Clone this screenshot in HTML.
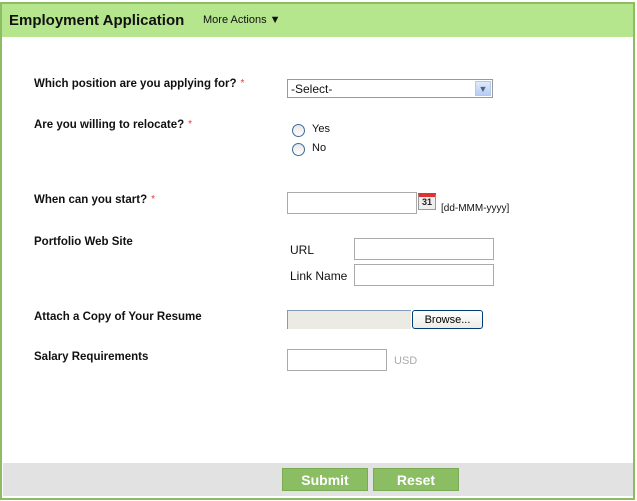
<!DOCTYPE html>
<html><head><style>
body{margin:0;width:637px;height:501px;background:#fff;font-family:"Liberation Sans",Arial,sans-serif;position:relative;overflow:hidden}
.frame{position:absolute;left:0;top:2px;width:631px;height:494px;border:2px solid #8dbd63;border-top-width:2px}
.hdr{position:absolute;left:2px;top:4px;width:631px;height:33px;background:#b5e58c}
.t{position:absolute;left:9px;top:12px;font-size:15px;font-weight:bold;color:#111}
.ma{position:absolute;left:203px;top:14px;font-size:11px;color:#111}
.lbl{position:absolute;left:34px;font-size:11.5px;font-weight:bold;color:#111}
.r{color:#e33;font-weight:normal;font-size:10px;margin-left:4px;vertical-align:top}
.box{position:absolute;border:1px solid #aaa;background:#fff;box-sizing:border-box}
.txt{position:absolute;font-size:12px;color:#111}
.rad{position:absolute;width:11px;height:11px;border:1px solid #3e6a9a;border-radius:50%;background:linear-gradient(#e6e6e6,#fff)}
.ftr{position:absolute;left:3px;top:463px;width:630px;height:33px;background:#e2e2e2}
.btn{position:absolute;top:468px;width:86px;height:23px;background:#8bbd62;border:1px solid #7aab54;color:#fff;font-weight:bold;font-size:14px;text-align:center;line-height:23px;box-sizing:border-box}
</style></head><body>
<div class="frame"></div>
<div class="hdr"></div>
<div class="t">Employment Application</div>
<div class="ma">More Actions ▼</div>

<div class="lbl" style="top:78px">Which position are you applying for?<span class="r">*</span></div>
<div class="box" style="left:287px;top:79px;width:206px;height:19px;border-color:#999"></div>
<div class="txt" style="left:291px;top:82px">-Select-</div>
<div style="position:absolute;left:475px;top:81px;width:16px;height:15px;background:linear-gradient(#dfe9fb,#b7cdf4);border:1px solid #b3c8ec;box-sizing:border-box;font-size:9px;color:#4d6185;text-align:center;line-height:14px">▼</div>

<div class="lbl" style="top:119px">Are you willing to relocate?<span class="r">*</span></div>
<div class="rad" style="left:292px;top:124px"></div><div class="txt" style="left:312px;top:123px;font-size:11px">Yes</div>
<div class="rad" style="left:292px;top:143px"></div><div class="txt" style="left:312px;top:142px;font-size:11px">No</div>

<div class="lbl" style="top:194px">When can you start?<span class="r">*</span></div>
<div class="box" style="left:287px;top:192px;width:130px;height:22px"></div>
<div style="position:absolute;left:418px;top:193px;width:18px;height:17px;background:#eee;border:1px solid #999;box-sizing:border-box;border-top:4px solid #d33;font-size:9px;font-weight:bold;text-align:center;line-height:11px;color:#222">31</div>
<div class="txt" style="left:441px;top:203px;font-size:10px">[dd-MMM-yyyy]</div>

<div class="lbl" style="top:236px">Portfolio Web Site</div>
<div class="txt" style="left:290px;top:243px">URL</div>
<div class="box" style="left:354px;top:238px;width:140px;height:22px"></div>
<div class="txt" style="left:290px;top:269px">Link Name</div>
<div class="box" style="left:354px;top:264px;width:140px;height:22px"></div>

<div class="lbl" style="top:311px">Attach a Copy of Your Resume</div>
<div style="position:absolute;left:287px;top:310px;width:124px;height:19px;background:#ebebe4;border-top:1px solid #7f9db9;border-left:1px solid #7f9db9;box-sizing:border-box"></div>
<div style="position:absolute;left:412px;top:310px;width:71px;height:19px;border:1px solid #003c74;border-radius:3px;background:linear-gradient(#fff,#ecebe6);box-sizing:border-box;font-size:11px;text-align:center;line-height:19px;color:#000">Browse...</div>

<div class="lbl" style="top:351px">Salary Requirements</div>
<div class="box" style="left:287px;top:349px;width:100px;height:22px"></div>
<div class="txt" style="left:394px;top:355px;color:#aaa;font-size:11px">USD</div>

<div class="ftr"></div>
<div class="btn" style="left:282px">Submit</div>
<div class="btn" style="left:373px">Reset</div>
</body></html>
